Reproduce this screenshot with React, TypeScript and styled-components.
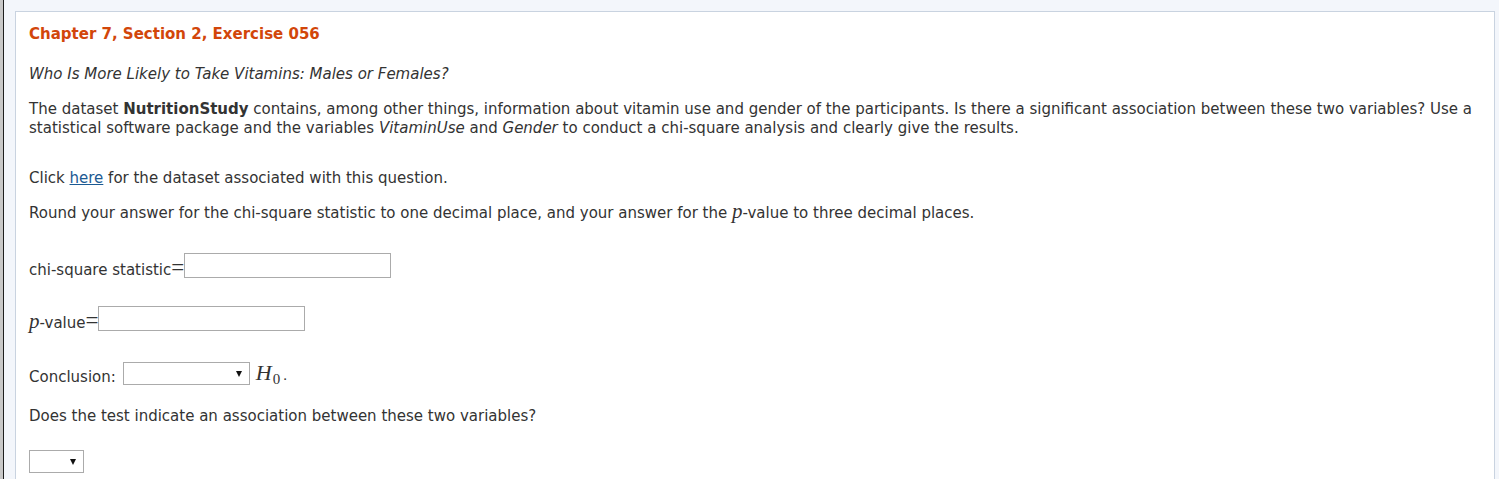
import styled, { createGlobalStyle } from "styled-components";

const GlobalStyle = createGlobalStyle`
  html, body {
    margin: 0;
    padding: 0;
    height: 100%;
    overflow: hidden;
  }
  body {
    font-family: "DejaVu Sans", Verdana, sans-serif;
    color: #333;
  }
`;

const Page = styled.div`
  display: flex;
  height: 479px;
  overflow: hidden;
`;

const Rail = styled.div`
  width: 3px;
  flex: none;
  background: #c8c8c8;
  border-right: 1px solid #1e1e1e;
`;

const Main = styled.div`
  flex: 1;
  background: #f3f6fb;
  padding: 11px 4px 0 11px;
`;

const Panel = styled.div`
  background: #fff;
  border: 1px solid #c9d3e0;
  border-bottom: none;
  height: 100%;
  box-sizing: border-box;
  padding: 13px 16px 0 13px;
`;

const Heading = styled.h2`
  margin: 0;
  font-size: 15px;
  line-height: 19px;
  font-weight: 700;
  color: #d2460a;
`;

const Para = styled.p<{ $gap: number }>`
  margin: ${(p) => p.$gap}px 0 0;
  font-size: 15px;
  line-height: 19px;
`;

const Subtitle = styled(Para)`
  font-style: italic;
`;

const Link = styled.a`
  color: #1c5a93;
  text-decoration: underline;
`;

const MathVar = styled.span`
  font-family: "Liberation Serif", "Times New Roman", serif;
  font-style: italic;
  font-size: 21px;
  line-height: 0;
`;

const MathEq = styled.span`
  font-family: "Liberation Serif", "Times New Roman", serif;
  font-size: 23px;
  line-height: 0;
`;

const Sub = styled.span`
  position: relative;
  top: 4px;
  font-style: normal;
  font-size: 15px;
  margin-left: 1px;
`;

const Row = styled.div<{ $gap: number }>`
  display: flex;
  align-items: flex-end;
  margin-top: ${(p) => p.$gap}px;
  font-size: 15px;
  line-height: 19px;
`;

const Label = styled.span`
  margin-bottom: -2px;
`;

const TextBox = styled.div`
  width: 205px;
  height: 23px;
  border: 1px solid #ababab;
  background: #fff;
`;

const Select = styled.div<{ $w: number }>`
  position: relative;
  width: ${(p) => p.$w}px;
  height: 21px;
  border: 1px solid #ababab;
  background: #fff;
  box-sizing: content-box;
`;

const Caret = styled.span`
  position: absolute;
  right: 7px;
  top: 8px;
  width: 0;
  height: 0;
  border-left: 3.5px solid transparent;
  border-right: 3.5px solid transparent;
  border-top: 6px solid #111;
`;

const ConclusionLabel = styled.span`
  margin-right: 7px;
  margin-bottom: -2px;
`;

const Hypothesis = styled.span`
  margin-left: 6px;
  font-family: "Liberation Serif", "Times New Roman", serif;
  font-size: 22px;
  line-height: 19px;
`;

const Dot = styled.span`
  font-style: normal;
  font-size: 15px;
  margin-left: 3px;
`;

export default function App() {
  return (
    <>
      <GlobalStyle />
      <Page>
        <Rail />
        <Main>
          <Panel>
            <Heading>Chapter 7, Section 2, Exercise 056</Heading>
            <Subtitle $gap={21}>
              Who Is More Likely to Take Vitamins: Males or Females?
            </Subtitle>
            <Para $gap={16}>
              The dataset <b>NutritionStudy</b> contains, among other things, information about
              vitamin use and gender of the participants. Is there a significant association
              between these two variables? Use a statistical software package and the variables{" "}
              <i>VitaminUse</i> and <i>Gender</i> to conduct a chi-square analysis and clearly
              give the results.
            </Para>
            <Para $gap={31}>
              Click <Link href="#">here</Link> for the dataset associated with this question.
            </Para>
            <Para $gap={16}>
              Round your answer for the chi-square statistic to one decimal place, and your answer
              for the <MathVar>p</MathVar>-value to three decimal places.
            </Para>
            <Row $gap={30}>
              <Label>
                chi-square statistic<MathEq>=</MathEq>
              </Label>
              <TextBox />
            </Row>
            <Row $gap={28}>
              <Label>
                <MathVar>p</MathVar>-value<MathEq>=</MathEq>
              </Label>
              <TextBox />
            </Row>
            <Row $gap={31}>
              <ConclusionLabel>Conclusion:</ConclusionLabel>
              <Select $w={125}>
                <Caret />
              </Select>
              <Hypothesis>
                <i>H</i>
                <Sub>0</Sub>
                <Dot>.</Dot>
              </Hypothesis>
            </Row>
            <Para $gap={22}>Does the test indicate an association between these two variables?</Para>
            <Row $gap={24}>
              <Select $w={53}>
                <Caret />
              </Select>
            </Row>
          </Panel>
        </Main>
      </Page>
    </>
  );
}
